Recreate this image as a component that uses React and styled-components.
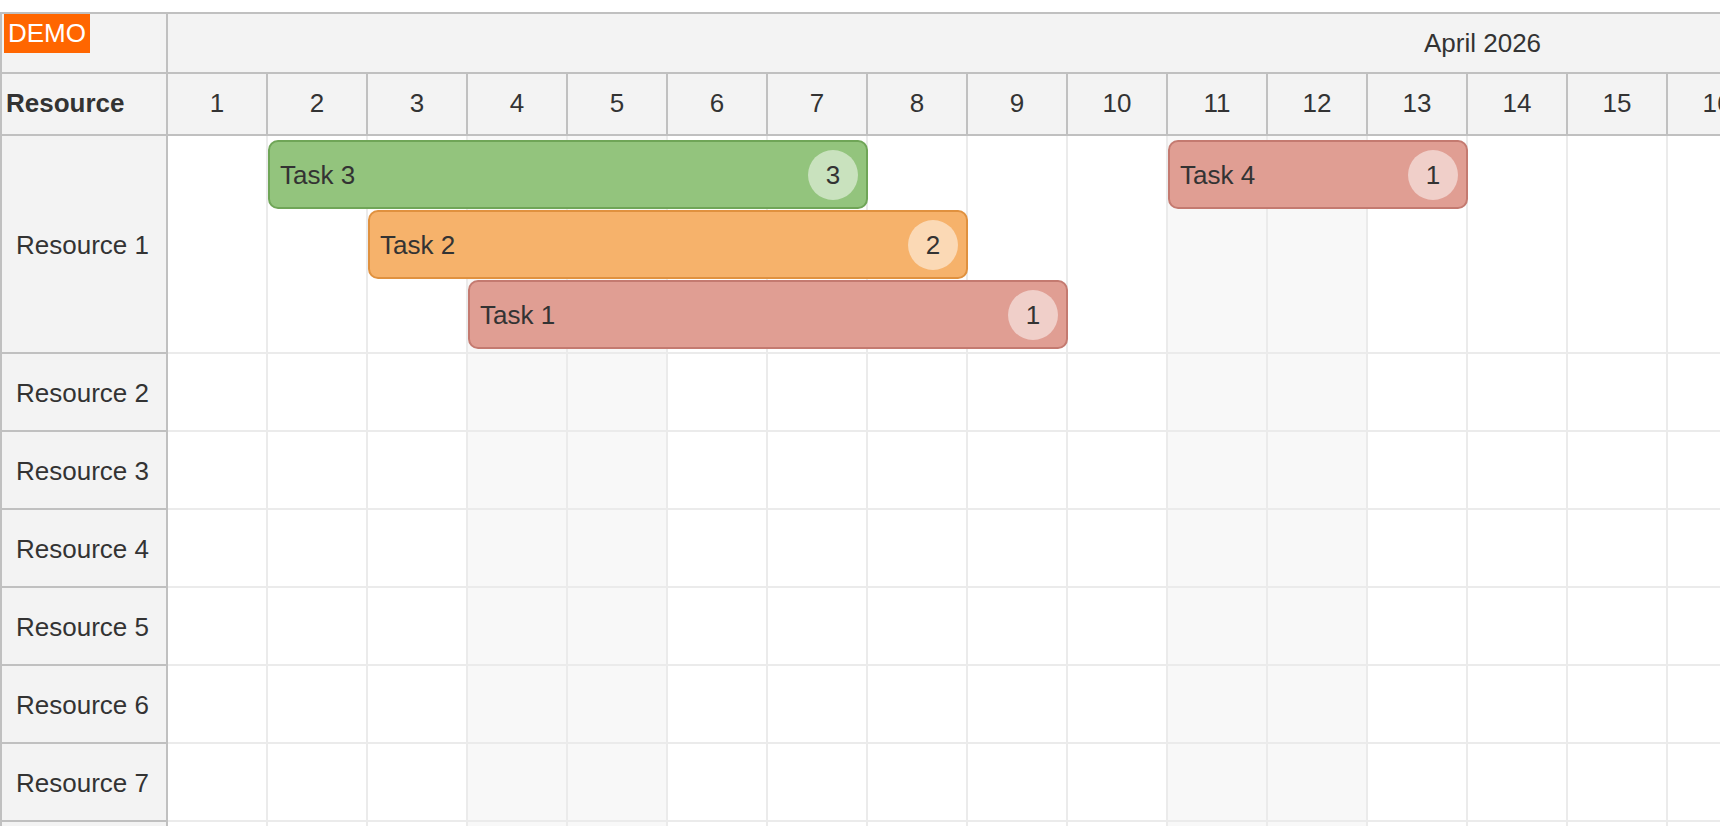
import React from "react";
import styled, { createGlobalStyle } from "styled-components";

const DAY_WIDTH = 100;
const LANE_HEIGHT = 70;
const DAYS = 30;
const WEEKENDS = [4, 5, 11, 12, 18, 19, 25, 26];

const resources = [
  "Resource 1",
  "Resource 2",
  "Resource 3",
  "Resource 4",
  "Resource 5",
  "Resource 6",
  "Resource 7",
  "Resource 8",
  "Resource 9",
];

const palette = {
  green: { bg: "#93c47d", border: "#6fa557" },
  orange: { bg: "#f6b26b", border: "#e0913f" },
  red: { bg: "#e09e93", border: "#c47a70" },
};

const events = [
  { id: 3, resource: 0, text: "Task 3", start: 2, days: 6, lane: 0, badge: 3, color: "green" },
  { id: 2, resource: 0, text: "Task 2", start: 3, days: 6, lane: 1, badge: 2, color: "orange" },
  { id: 1, resource: 0, text: "Task 1", start: 4, days: 6, lane: 2, badge: 1, color: "red" },
  { id: 4, resource: 0, text: "Task 4", start: 11, days: 3, lane: 0, badge: 1, color: "red" },
];

const GlobalStyle = createGlobalStyle`
  * {
    box-sizing: border-box;
  }
  body {
    margin: 0;
    padding-top: 12px;
    overflow: hidden;
    background: #ffffff;
    font-family: "Liberation Sans", Arial, sans-serif;
    font-size: 26px;
    color: #333333;
  }
`;

export default function App() {
  const days = Array.from({ length: DAYS }, (_, i) => i + 1);

  return (
    <>
      <GlobalStyle />
      <Scheduler>
        <HeaderRow $height={60}>
          <Corner $align="flex-start">
            <DemoBadge>DEMO</DemoBadge>
          </Corner>
          <MonthCell>April 2026</MonthCell>
        </HeaderRow>
        <HeaderRow $height={62} $shift={2}>
          <Corner $align="center">
            <ResourceTitle>Resource</ResourceTitle>
          </Corner>
          {days.map((d) => (
            <DayHeader key={d}>{d}</DayHeader>
          ))}
        </HeaderRow>

        {resources.map((name, index) => {
          const rowEvents = events.filter((e) => e.resource === index);
          const lanes = Math.max(1, ...rowEvents.map((e) => e.lane + 1));
          const height = 6 + lanes * LANE_HEIGHT + 2;
          return (
            <Row key={name} $height={height}>
              <ResourceCell>{name}</ResourceCell>
              <Cells>
                {days.map((d) => (
                  <Cell key={d} $weekend={WEEKENDS.includes(d)} />
                ))}
                {rowEvents.map((e) => (
                  <Event
                    key={e.id}
                    $color={e.color}
                    style={{
                      left: (e.start - 1) * DAY_WIDTH,
                      top: 4 + e.lane * LANE_HEIGHT,
                      width: e.days * DAY_WIDTH,
                    }}
                  >
                    <EventText>{e.text}</EventText>
                    <Badge>{e.badge}</Badge>
                  </Event>
                ))}
              </Cells>
            </Row>
          );
        })}
      </Scheduler>
    </>
  );
}

const Scheduler = styled.div`
  width: ${168 + DAYS * DAY_WIDTH}px;
  border-top: 2px solid #c0c0c0;
  border-left: 2px solid #c0c0c0;
`;

const HeaderRow = styled.div`
  display: flex;
  height: ${(p) => p.$height}px;
  padding-bottom: ${(p) => p.$shift || 0}px;
  background: #f3f3f3;
  border-bottom: 2px solid #c0c0c0;

  & > * {
    margin-bottom: ${(p) => -(p.$shift || 0)}px;
  }
`;

const Corner = styled.div`
  flex: 0 0 166px;
  display: flex;
  align-items: ${(p) => p.$align};
  padding-left: 2px;
  border-right: 2px solid #c0c0c0;
`;

const DemoBadge = styled.div`
  height: 39px;
  line-height: 39px;
  padding: 0 4px;
  background: #ff6600;
  color: #ffffff;
`;

const ResourceTitle = styled.div`
  padding-left: 2px;
  padding-bottom: 2px;
  font-weight: bold;
`;

const MonthCell = styled.div`
  flex: 1;
  display: flex;
  align-items: center;
  padding-left: 1256px;
`;

const DayHeader = styled.div`
  flex: 0 0 ${DAY_WIDTH}px;
  display: flex;
  align-items: center;
  justify-content: center;
  padding-bottom: 2px;
  border-right: 2px solid #c0c0c0;
`;

const Row = styled.div`
  display: flex;
  height: ${(p) => p.$height}px;
`;

const ResourceCell = styled.div`
  flex: 0 0 166px;
  display: flex;
  align-items: center;
  justify-content: center;
  padding: 2px 3px 0 0;
  background: #f3f3f3;
  border-right: 2px solid #c0c0c0;
  border-bottom: 2px solid #c0c0c0;
`;

const Cells = styled.div`
  position: relative;
  display: flex;
  flex: 1;
`;

const Cell = styled.div`
  flex: 0 0 ${DAY_WIDTH}px;
  background: ${(p) => (p.$weekend ? "#f8f8f8" : "#ffffff")};
  border-right: 2px solid #ebebeb;
  border-bottom: 2px solid #ebebeb;
`;

const Event = styled.div`
  position: absolute;
  height: 69px;
  display: flex;
  align-items: center;
  justify-content: space-between;
  padding: 0 8px 0 10px;
  background: ${(p) => palette[p.$color].bg};
  border: 2px solid ${(p) => palette[p.$color].border};
  border-radius: 10px;
  color: #333333;
`;

const EventText = styled.span`
  padding-top: 2px;
`;

const Badge = styled.div`
  width: 50px;
  height: 50px;
  padding-top: 2px;
  border-radius: 50%;
  display: flex;
  align-items: center;
  justify-content: center;
  background: rgba(255, 255, 255, 0.5);
`;
